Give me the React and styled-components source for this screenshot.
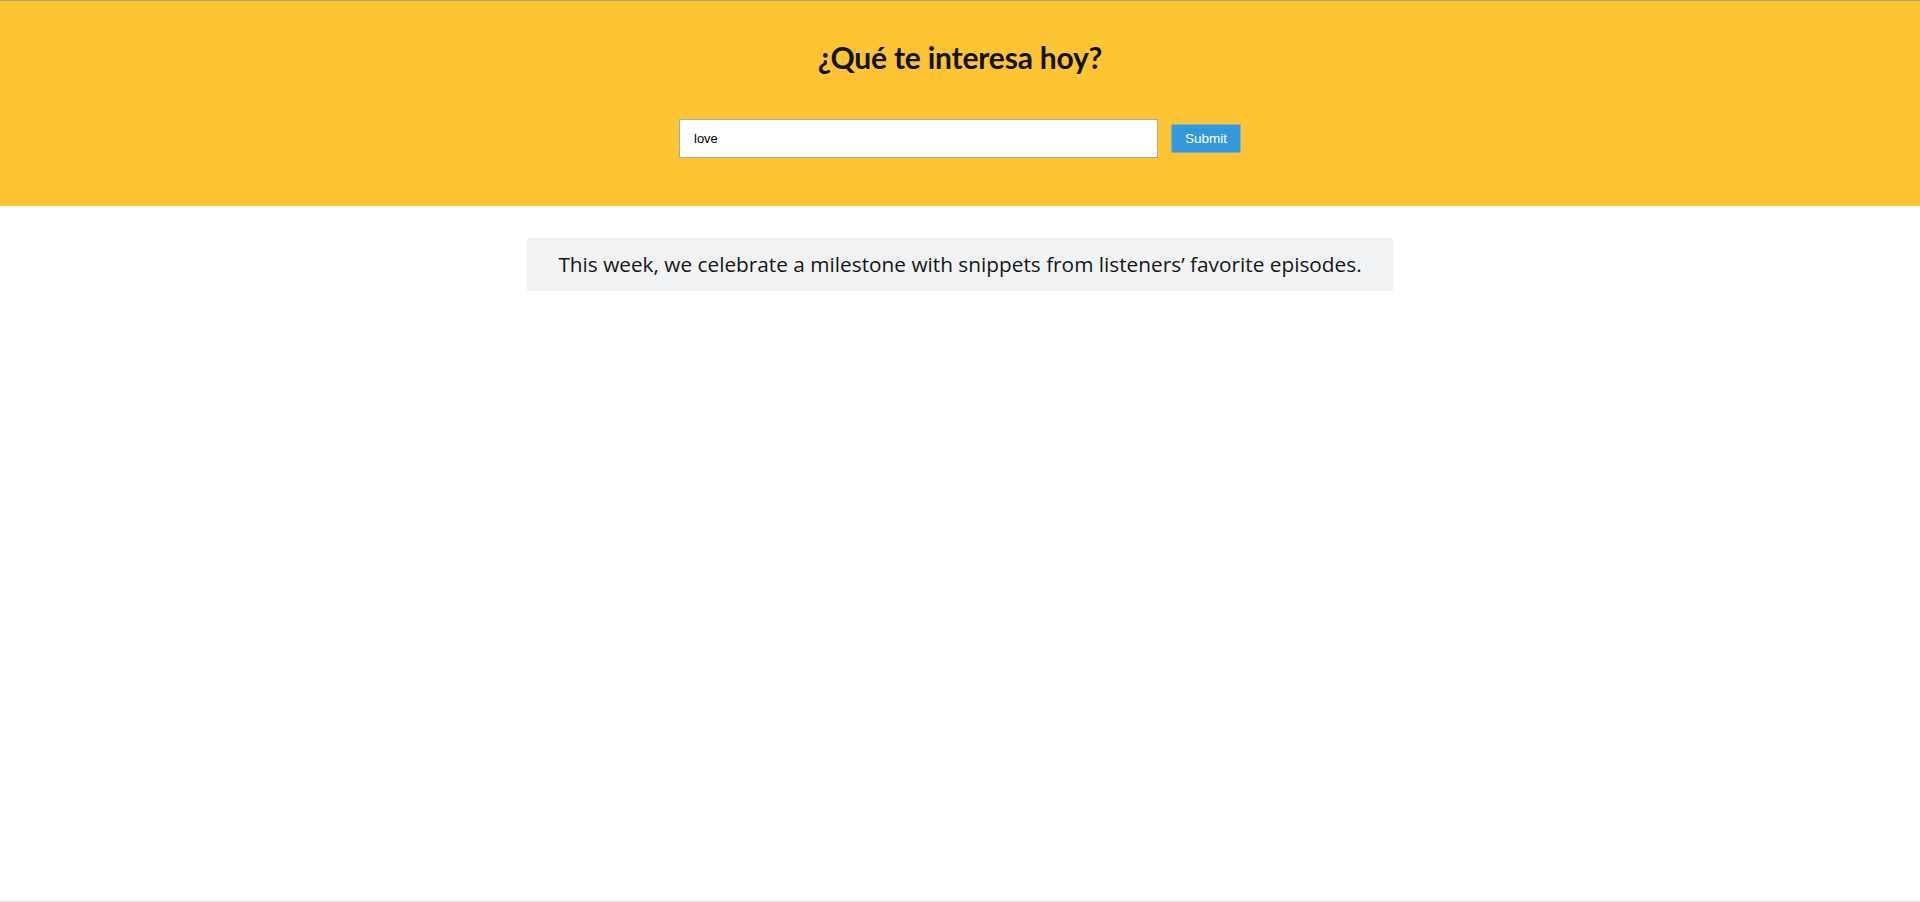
import React from 'react';
import styled, { createGlobalStyle } from 'styled-components';

const GlobalStyle = createGlobalStyle`
  html, body {
    margin: 0;
    padding: 0;
    background: #fff;
  }
  * {
    box-sizing: border-box;
  }
`;

const Page = styled.div`
  min-height: 100vh;
  display: flex;
  flex-direction: column;
  border-top: 1px solid #b3a27c;
  border-bottom: 1px solid #d3d3d3;
`;

const Header = styled.header`
  background: #fdc434;
  height: 205px;
  display: flex;
  flex-direction: column;
  align-items: center;
`;

const Title = styled.h1`
  margin: 35px 0 0;
  font-family: Lato, 'Open Sans', sans-serif;
  font-weight: 700;
  font-size: 30px;
  line-height: 42px;
  color: #111;
  letter-spacing: -0.2px;
`;

const SearchForm = styled.form`
  margin-top: 41px;
  display: flex;
  align-items: center;
  gap: 13px;
`;

const SearchInput = styled.input`
  width: 479px;
  height: 39px;
  padding: 0 14px;
  border: 1px solid #a9a9a9;
  background: #fff;
  font-family: 'Liberation Sans', Arial, sans-serif;
  font-size: 13px;
  color: #000;
  outline: none;
`;

const SubmitButton = styled.button`
  width: 70px;
  height: 29px;
  padding: 0;
  border: 1px solid #8aa9c2;
  border-radius: 2px;
  background: #3498db;
  color: #fff;
  font-family: 'Liberation Sans', Arial, sans-serif;
  font-size: 13.5px;
  font-weight: 400;
  cursor: pointer;
`;

const Content = styled.main`
  display: flex;
  justify-content: center;
  padding-top: 32px;
`;

const Notice = styled.p`
  margin: 0;
  padding: 10px 31px 10px;
  background: #f1f2f4;
  font-family: 'Open Sans', sans-serif;
  font-size: 20.8px;
  line-height: 33px;
  color: #161616;
`;

export default function App() {
  return (
    <Page>
      <GlobalStyle />
      <Header>
        <Title>¿Qué te interesa hoy?</Title>
        <SearchForm onSubmit={(e) => e.preventDefault()}>
          <SearchInput defaultValue="love" />
          <SubmitButton type="submit">Submit</SubmitButton>
        </SearchForm>
      </Header>
      <Content>
        <Notice>
          This week, we celebrate a milestone with snippets from listeners’ favorite episodes.
        </Notice>
      </Content>
    </Page>
  );
}
